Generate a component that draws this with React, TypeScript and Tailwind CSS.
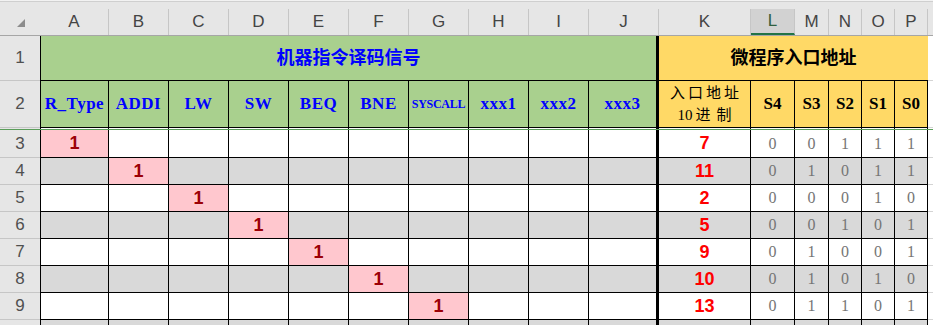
import React from 'react'

// column widths incl. borders (A..P)
const COLS = [
  { k: 'A', w: 'w-[69px] border-l', hw: 'w-[69px]' },
  { k: 'B', w: 'w-[60px]', hw: 'w-[60px]' },
  { k: 'C', w: 'w-[60px]', hw: 'w-[60px]' },
  { k: 'D', w: 'w-[60px]', hw: 'w-[60px]' },
  { k: 'E', w: 'w-[60px]', hw: 'w-[60px]' },
  { k: 'F', w: 'w-[60px]', hw: 'w-[60px]' },
  { k: 'G', w: 'w-[60px]', hw: 'w-[60px]' },
  { k: 'H', w: 'w-[60px]', hw: 'w-[60px]' },
  { k: 'I', w: 'w-[60px]', hw: 'w-[60px]' },
  { k: 'J', w: 'w-[70px] border-r-[3px]', hw: 'w-[70px]' },
  { k: 'K', w: 'w-[92px]', hw: 'w-[92px]' },
  { k: 'L', w: 'w-[44px]', hw: 'w-[44px]' },
  { k: 'M', w: 'w-[34px]', hw: 'w-[34px]' },
  { k: 'N', w: 'w-[33px]', hw: 'w-[33px]' },
  { k: 'O', w: 'w-[33px]', hw: 'w-[33px]' },
  { k: 'P', w: 'w-[33px]', hw: 'w-[33px]' },
]

const OPS = ['R_Type', 'ADDI', 'LW', 'SW', 'BEQ', 'BNE', 'SYSCALL', 'xxx1', 'xxx2', 'xxx3']
const BITS = ['S4', 'S3', 'S2', 'S1', 'S0']

const ROWS = [
  { n: 3, hit: 0, dec: '7', bits: '00111' },
  { n: 4, hit: 1, dec: '11', bits: '01011' },
  { n: 5, hit: 2, dec: '2', bits: '00010' },
  { n: 6, hit: 3, dec: '5', bits: '00101' },
  { n: 7, hit: 4, dec: '9', bits: '01001' },
  { n: 8, hit: 5, dec: '10', bits: '01010' },
  { n: 9, hit: 6, dec: '13', bits: '01101' },
]

// serif label font (the sheet uses 新宋体)
const label = "font-['Liberation_Serif',serif] font-bold"

function RowHead({ n, h }: { n?: number; h: string }) {
  return (
    <div className={`w-[40px] shrink-0 ${h} bg-[#e6e6e6] border-b border-[#c6c6c6] flex items-center justify-center text-[17px] text-[#505050]`}>
      {n}
    </div>
  )
}

function DataRow({ n, hit, dec, bits, first }: { n: number; hit: number; dec: string; bits: string; first?: boolean }) {
  const bg = n % 2 === 0 ? 'bg-[#d9d9d9]' : 'bg-white'
  const h = first ? 'h-[28px]' : 'h-[27px]'
  return (
    <div className="flex">
      <RowHead n={n <= 9 ? n : undefined} h={h} />
      {COLS.map((c, i) => {
        let content: React.ReactNode = null
        let cellBg = bg
        if (i === hit) {
          cellBg = 'bg-[#ffc7ce]'
          content = <span className="font-bold text-[18px] text-[#9c0006]">1</span>
        }
        if (i === 10) content = <span className="font-bold text-[18px] text-[#ff0000]">{dec}</span>
        if (i > 10) content = <span className="font-['Liberation_Serif',serif] text-[16px] text-[#757575]">{bits[i - 11]}</span>
        return (
          <div key={c.k} className={`${c.w} ${h} ${cellBg} shrink-0 border-r border-b border-black flex items-center justify-center`}>
            {content}
          </div>
        )
      })}
      <div className={`flex-1 ${h} bg-white border-b border-[#d4d4d4]`} />
    </div>
  )
}

export default function App() {
  return (
    <div className="w-[933px] h-[325px] overflow-hidden bg-white font-['Liberation_Sans','Noto_Sans_CJK_SC',sans-serif]">
      {/* top strip */}
      <div className="h-[2px] bg-[#f2f2f2] border-b border-[#cfcfcf]" />

      {/* column letters */}
      <div className="flex items-end h-[34px] bg-[#e6e6e6] border-b border-[#a6a6a6]">
        <div className="w-[40px] h-full shrink-0 pl-[17px] pt-[17px]">
          <svg width="8" height="8" viewBox="0 0 8 8">
            <polygon points="8,0 8,8 0,8" fill="#8c8c8c" />
          </svg>
        </div>
        {COLS.map(c => (
          <div
            key={c.k}
            className={`${c.hw} h-[26px] shrink-0 border-r border-[#c6c6c6] flex items-center justify-center text-[17px] ${c.k === 'L' ? 'bg-[#d2d2d2] border-b-2 border-b-[#217346] text-[#2f5f3f]' : 'text-[#444]'}`}
          >
            {c.k}
          </div>
        ))}
        <div className="flex-1 h-[26px]" />
      </div>

      {/* row 1 */}
      <div className="flex">
        <RowHead n={1} h="h-[45px]" />
        <div className="w-[619px] h-[45px] shrink-0 bg-[#a9d08e] border-l border-r-[3px] border-b border-black flex items-center justify-center font-bold text-[18px] text-[#0000ff]">
          机器指令译码信号
        </div>
        <div className="w-[269px] h-[45px] shrink-0 bg-[#ffd966] border-b border-black flex items-center justify-center font-bold text-[18px] text-black">
          微程序入口地址
        </div>
        <div className="flex-1 h-[45px] border-b border-[#d4d4d4]" />
      </div>

      {/* row 2 */}
      <div className="flex">
        <RowHead n={2} h="h-[47px]" />
        {COLS.map((c, i) => {
          let content: React.ReactNode
          let bg = 'bg-[#a9d08e]'
          if (i < 10) {
            const size = OPS[i] === 'SYSCALL' ? 'text-[12px] tracking-[-0.3px]' : 'text-[17px] tracking-[0.5px]'
            content = <span className={`${label} ${size} text-[#0000ff]`}>{OPS[i]}</span>
          } else if (i === 10) {
            bg = 'bg-[#ffd966]'
            content = (
              <div className="font-['Liberation_Serif','Noto_Sans_CJK_SC',serif] text-[15px] leading-[22px] text-black text-center">
                <div className="tracking-[3px] pl-[3px]">入口地址</div>
                <div>
                  <span className="mr-[3px]">10</span>
                  <span className="tracking-[6px] mr-[-6px]">进制</span>
                </div>
              </div>
            )
          } else {
            bg = 'bg-[#ffd966]'
            content = <span className={`${label} text-[17px] text-black`}>{BITS[i - 11]}</span>
          }
          return (
            <div key={c.k} className={`${c.w} h-[47px] ${bg} shrink-0 border-r border-b border-black flex items-center justify-center`}>
              {content}
            </div>
          )
        })}
        <div className="flex-1 h-[47px] border-b border-[#d4d4d4]" />
      </div>

      {/* frozen pane line */}
      <div className="flex h-[1px]">
        <div className="w-[40px] shrink-0 bg-[#e6e6e6]" />
        {COLS.map(c => (
          <div key={c.k} className={`${c.w} h-[1px] shrink-0 bg-white border-r border-black`} />
        ))}
        <div className="flex-1" />
      </div>
      <div className="h-[1px] bg-[#5a9e5a]" />

      {ROWS.map((r, i) => (
        <DataRow key={r.n} {...r} first={i === 0} />
      ))}
      <DataRow n={10} hit={-1} dec="" bits="     " />
    </div>
  )
}
